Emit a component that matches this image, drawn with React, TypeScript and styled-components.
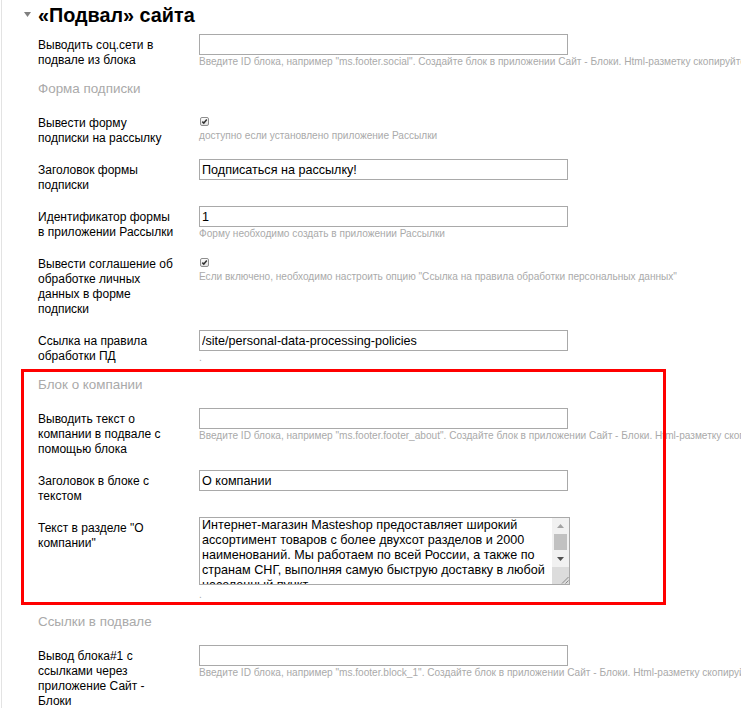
import { FC, ReactNode } from 'react';
import styled, { createGlobalStyle } from 'styled-components';

const GlobalStyle = createGlobalStyle`
  html, body {
    margin: 0;
    padding: 0;
    background: #fff;
    overflow: hidden;
  }
  body {
    font-family: "Liberation Sans", Arial, sans-serif;
    color: #000;
  }
`;

const Page = styled.div`
  margin-left: 1px;
  border-left: 1px solid #e3e3e3;
  min-height: 708px;
`;

const Header = styled.div`
  display: flex;
  align-items: flex-start;
  padding: 4px 0 0 22px;
  margin-bottom: 7px;
`;

const Caret = styled.svg`
  margin: 8px 7px 0 0;
  flex-shrink: 0;
`;

const Title = styled.h1`
  margin: 0;
  font-size: 19.8px;
  line-height: 23px;
  font-weight: bold;
`;

const Content = styled.div`
  padding-left: 36px;
`;

const SectionTitle = styled.div`
  font-size: 13.4px;
  line-height: 15px;
  color: #aaa;
  margin-bottom: 16px;
`;

const Highlight = styled.div`
  position: relative;
  &::after {
    content: '';
    position: absolute;
    top: -8px;
    bottom: -4px;
    left: -17px;
    width: 645px;
    box-sizing: border-box;
    border: 3px solid #ff0000;
    pointer-events: none;
  }
`;

const Row = styled.div`
  display: flex;
  align-items: flex-start;
  margin-bottom: 13px;
`;

const Label = styled.div`
  width: 140px;
  flex-shrink: 0;
  margin-right: 21px;
  padding-top: 4px;
  font-size: 12px;
  line-height: 15px;
`;

const Value = styled.div`
  display: flex;
  flex-direction: column;
  min-width: 0;
`;

const TextInput = styled.input`
  box-sizing: border-box;
  width: 369px;
  height: 21px;
  margin: 0;
  padding: 0 2px;
  border: 1px solid #a9a9a9;
  font-family: "Liberation Sans", Arial, sans-serif;
  font-size: 12.6px;
  color: #000;
  outline: none;
`;

const Hint = styled.div<{ $gap?: number }>`
  margin-top: ${({ $gap }) => $gap ?? 0}px;
  font-size: 10.1px;
  line-height: 13px;
  color: #aaa;
  white-space: nowrap;
`;

const CheckLine = styled.div`
  height: 17px;
  padding-left: 1px;
`;

const CheckBox = styled.span`
  display: block;
  box-sizing: border-box;
  width: 9px;
  height: 9px;
  margin-top: 5px;
  border: 1px solid #8e8e8e;
  border-radius: 2px;
  background: linear-gradient(#fcfcfc, #e2e2e2);
  position: relative;
  & svg {
    position: absolute;
    left: 0;
    top: 0;
  }
`;

const TextareaFrame = styled.div`
  display: flex;
  box-sizing: border-box;
  width: 371px;
  height: 68px;
  border: 1px solid #a9a9a9;
`;

const TextArea = styled.textarea`
  flex: 1;
  min-width: 0;
  margin: 0;
  padding: 0 2px;
  border: none;
  resize: none;
  overflow: hidden;
  outline: none;
  font-family: "Liberation Sans", Arial, sans-serif;
  font-size: 12.6px;
  line-height: 15px;
  color: #000;
`;

const ScrollBar = styled.div`
  width: 17px;
  flex-shrink: 0;
  display: flex;
  flex-direction: column;
  background: #f1f1f1;
`;

const ScrollButton = styled.div<{ $h: number }>`
  height: ${({ $h }) => $h}px;
  display: flex;
  align-items: center;
  justify-content: center;
`;

const Thumb = styled.div`
  height: 16px;
  margin: 0 2px;
  background: #c1c1c1;
`;

const Resizer = styled.div`
  flex: 1;
  background: #dcdcdc;
  display: flex;
  align-items: flex-end;
  justify-content: flex-end;
`;

const CheckMark = () => (
  <svg width="7" height="7" viewBox="0 0 7 7">
    <path d="M1.3 3.6 L2.8 5.1 L5.8 1.6" fill="none" stroke="#333" strokeWidth="1.5" />
  </svg>
);

const Field: FC<{ label: ReactNode; children: ReactNode }> = ({ label, children }) => (
  <Row>
    <Label>{label}</Label>
    <Value>{children}</Value>
  </Row>
);

const aboutText =
  'Интернет-магазин Masteshop предоставляет широкий ассортимент товаров с более двухсот разделов и 2000 наименований. Мы работаем по всей России, а также по странам СНГ, выполняя самую быструю доставку в любой населенный пункт.';

const blockHint = (id: string) =>
  `Введите ID блока, например "${id}". Создайте блок в приложении Сайт - Блоки. Html-разметку скопируйте из демо-версии темы`;

export default function App() {
  return (
    <Page>
      <GlobalStyle />
      <Header>
        <Caret width="7" height="5" viewBox="0 0 7 5">
          <path d="M0 0 H7 L3.5 5 Z" fill="#808080" />
        </Caret>
        <Title>«Подвал» сайта</Title>
      </Header>
      <Content>
        <Field label="Выводить соц.сети в подвале из блока">
          <TextInput defaultValue="" />
          <Hint>{blockHint('ms.footer.social')}</Hint>
        </Field>

        <SectionTitle>Форма подписки</SectionTitle>
        <Field label="Вывести форму подписки на рассылку">
          <CheckLine>
            <CheckBox>
              <CheckMark />
            </CheckBox>
          </CheckLine>
          <Hint>доступно если установлено приложение Рассылки</Hint>
        </Field>
        <Field label="Заголовок формы подписки">
          <TextInput defaultValue="Подписаться на рассылку!" />
        </Field>
        <Field label="Идентификатор формы в приложении Рассылки">
          <TextInput defaultValue="1" />
          <Hint>Форму необходимо создать в приложении Рассылки</Hint>
        </Field>
        <Field label="Вывести соглашение об обработке личных данных в форме подписки">
          <CheckLine>
            <CheckBox>
              <CheckMark />
            </CheckBox>
          </CheckLine>
          <Hint>
            Если включено, необходимо настроить опцию "Ссылка на правила обработки персональных данных"
          </Hint>
        </Field>
        <Field label="Ссылка на правила обработки ПД">
          <TextInput defaultValue="/site/personal-data-processing-policies" />
          <Hint>.</Hint>
        </Field>

        <Highlight>
          <SectionTitle>Блок о компании</SectionTitle>
          <Field label="Выводить текст о компании в подвале с помощью блока">
            <TextInput defaultValue="" />
            <Hint>{blockHint('ms.footer.footer_about')}</Hint>
          </Field>
          <Field label="Заголовок в блоке с текстом">
            <TextInput defaultValue="О компании" />
          </Field>
          <Field label={'Текст в разделе "О компании"'}>
            <TextareaFrame>
              <TextArea defaultValue={aboutText} />
              <ScrollBar>
                <ScrollButton $h={16}>
                  <svg width="7" height="4" viewBox="0 0 7 4">
                    <path d="M0 4 L3.5 0 L7 4 Z" fill="#a3a3a3" />
                  </svg>
                </ScrollButton>
                <Thumb />
                <ScrollButton $h={17}>
                  <svg width="7" height="4" viewBox="0 0 7 4">
                    <path d="M0 0 L7 0 L3.5 4 Z" fill="#505050" />
                  </svg>
                </ScrollButton>
                <Resizer>
                  <svg width="9" height="9" viewBox="0 0 9 9">
                    <path d="M8.5 2 L2 8.5 M8.5 5.5 L5.5 8.5" stroke="#8a8a8a" strokeWidth="1" />
                  </svg>
                </Resizer>
              </ScrollBar>
            </TextareaFrame>
            <Hint $gap={3}>.</Hint>
          </Field>
        </Highlight>

        <SectionTitle>Ссылки в подвале</SectionTitle>
        <Field label="Вывод блока#1 с ссылками через приложение Сайт - Блоки">
          <TextInput defaultValue="" />
          <Hint>{blockHint('ms.footer.block_1')}</Hint>
        </Field>
      </Content>
    </Page>
  );
}
